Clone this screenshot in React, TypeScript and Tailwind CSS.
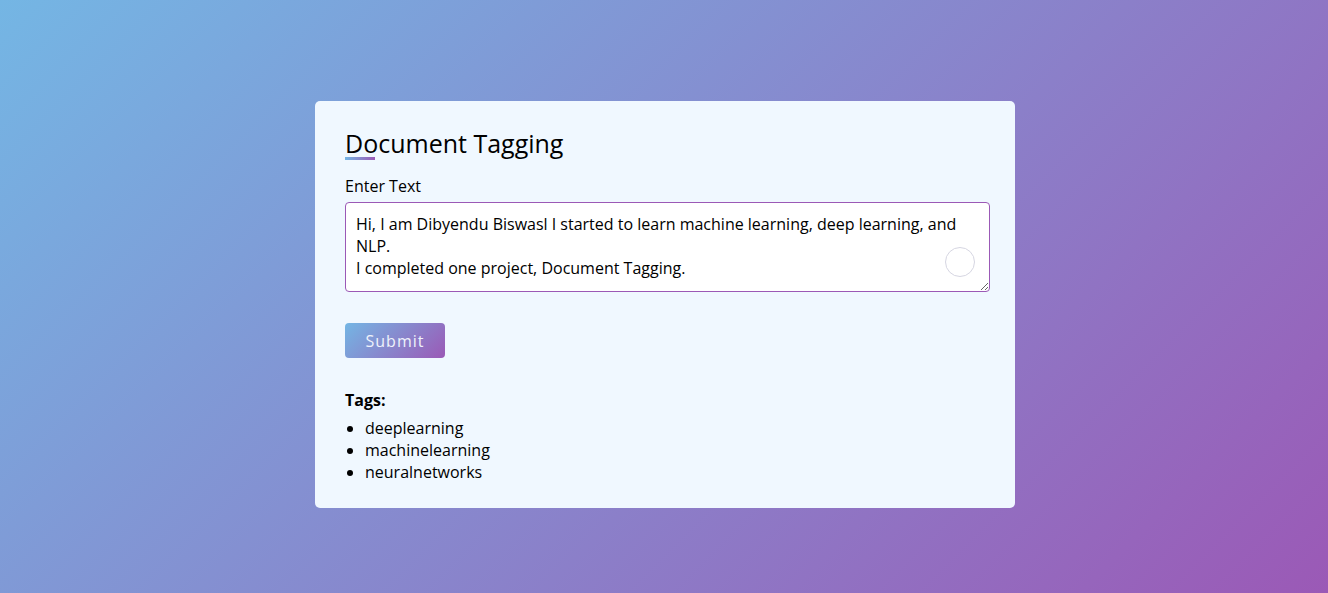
import React from "react";

export default function App() {
  return (
    <div
      className="min-h-screen w-full flex justify-center pt-[101px] pl-[2px] bg-[linear-gradient(135deg,#74b6e4,#9b59b6)]"
      style={{ minHeight: 593 }}
    >
      <div className="w-[700px] h-[407px] bg-[#f0f8ff] rounded-[5px] p-[30px] font-['Open_Sans',sans-serif] text-black">
        <h1 className="relative text-[25px] leading-[24px] m-0 font-normal">
          Document Tagging
          <span className="absolute left-0 top-[26px] w-[30px] h-[3px] bg-[linear-gradient(90deg,#74b6e4,#9b59b6)]" />
        </h1>
        <label className="block mt-[20px] text-[16px] leading-[22px]">Enter Text</label>
        <div className="relative mt-[5px]">
          <textarea
            className="block w-[645px] h-[90px] border border-[#9b59b6] rounded-[4px] bg-white px-[10px] py-[10px] text-[16px] leading-[22px] text-black outline-none resize-y font-['Open_Sans',sans-serif]"
            defaultValue={"Hi, I am Dibyendu Biswasl I started to learn machine learning, deep learning, and NLP.\nI completed one project, Document Tagging."}
          />
          <span className="absolute left-[600px] top-[45px] w-[30px] h-[30px] rounded-full border border-[#d6d6e2] bg-white" />
        </div>
        <button className="mt-[31px] w-[100px] h-[35px] rounded-[4px] bg-[linear-gradient(135deg,#74b6e4,#9b59b6)] text-[#eef2fb] text-[16px] tracking-[1px] font-['Open_Sans',sans-serif]">
          Submit
        </button>
        <div className="mt-[31px] text-[16px] leading-[22px] font-bold">Tags:</div>
        <ul className="mt-[6px] list-disc pl-[20px] text-[16px] leading-[22px]">
          <li>deeplearning</li>
          <li>machinelearning</li>
          <li>neuralnetworks</li>
        </ul>
      </div>
    </div>
  );
}
